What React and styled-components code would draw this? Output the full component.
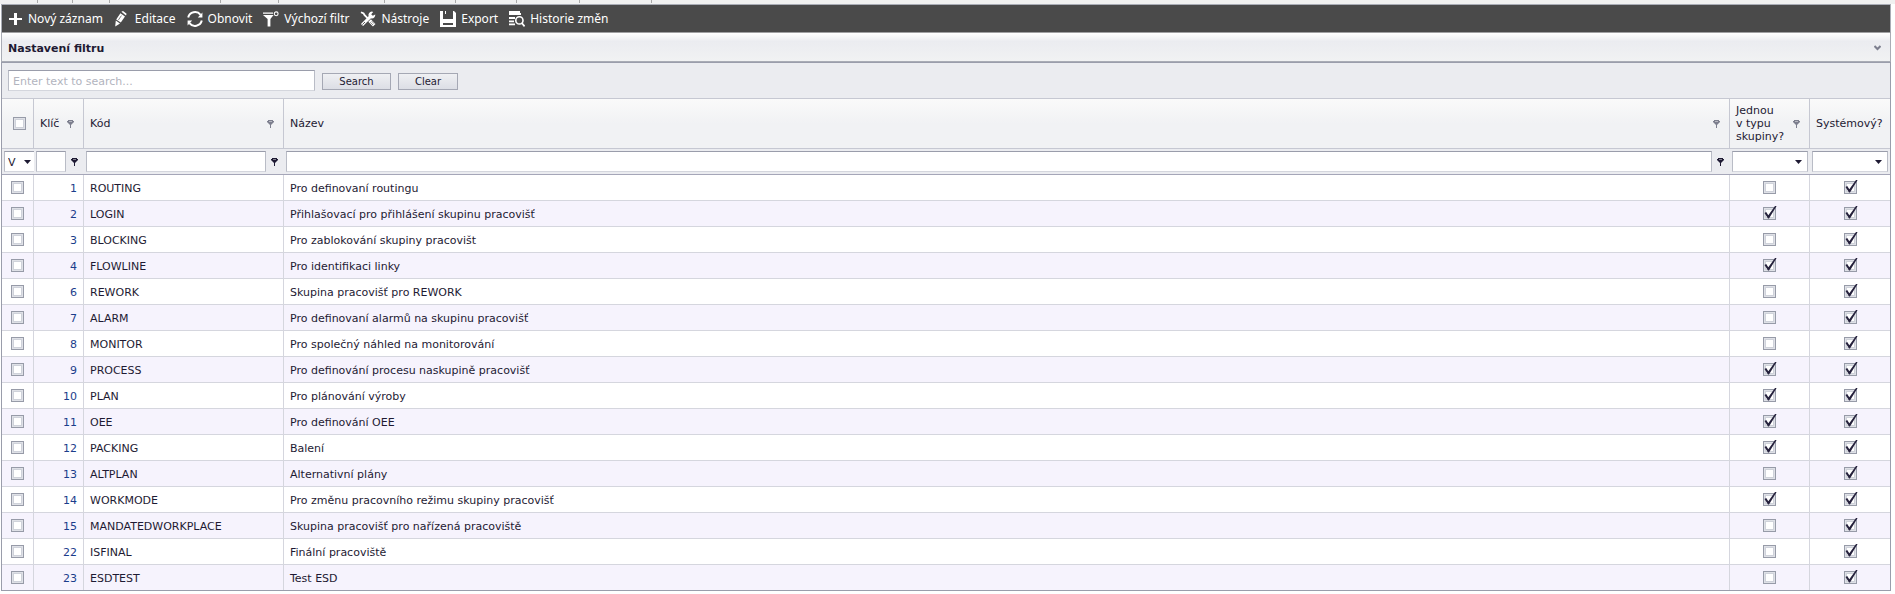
import React, { useState } from "react";
import styled, { createGlobalStyle, css } from "styled-components";

const GlobalStyle = createGlobalStyle`
  *, *::before, *::after { box-sizing: border-box; }
  body {
    margin: 0;
    background: #fff;
    color: #1e1a33;
    font-family: Verdana, "DejaVu Sans", sans-serif;
    font-size: 11px;
    line-height: 13px;
  }
  input, select, button { font: inherit; color: inherit; margin: 0; }
`;

const Page = styled.div`
  padding-right: 4px;
`;

const TabStrip = styled.div`
  display: flex;
  height: 4px;
  margin-right: -4px;
  background: #f0f0f0;
`;

const TabEdge = styled.div`
  width: ${(p) => p.$width}px;
  height: 3px;
  border-right: 1px solid #a8a8a8;
`;

const Panel = styled.main`
  margin-left: 1px;
`;

const Toolbar = styled.nav`
  display: flex;
  align-items: center;
  gap: 11px;
  height: 29px;
  padding: 0 5px;
  border: 1px solid #a9acb5;
  border-bottom-color: #a0a0a2;
  background: #4a4a4a;
`;

const ToolButton = styled.button`
  display: flex;
  align-items: center;
  gap: 5px;
  padding: 0;
  border: 0;
  background: none;
  color: #fff;
  font-family: "Segoe UI", "Noto Sans", sans-serif;
  font-size: 12px;
  line-height: 16px;
  white-space: nowrap;
  cursor: pointer;
  svg { flex: none; display: block; }
`;

const FilterHeader = styled.header`
  display: flex;
  align-items: center;
  justify-content: space-between;
  height: 29px;
  padding: 2px 9px 0 6px;
  border: 1px solid #a9acb5;
  border-width: 0 1px 1px;
  background: linear-gradient(#ffffff, #ebecf0 30%, #f1f2f3);
`;

const FilterTitle = styled.h1`
  margin: 0;
  font-size: 11px;
  line-height: 13px;
  font-weight: bold;
`;

const IconButton = styled.button`
  display: grid;
  place-items: center;
  flex: none;
  padding: 0;
  border: 0;
  background: none;
  color: ${(p) => (p.$dark ? "#1e1a33" : "#7d7f8e")};
  cursor: pointer;
  svg { display: block; }
`;

const Grid = styled.section`
  border: 1px solid #9a9dab;
  background: #fff;
`;

const SearchBar = styled.form`
  display: flex;
  align-items: center;
  gap: 7px;
  height: 36px;
  padding: 0 6px;
  border-bottom: 1px solid #c6c8d2;
  background: #ebecf0;
`;

const TextInput = styled.input`
  width: ${(p) => (p.$width ? `${p.$width}px` : "100%")};
  min-width: 0;
  height: 21px;
  padding: 2px 4px 0;
  border: 1px solid #d4d6dd;
  border-top-color: #9a9dab;
  border-left-color: #b9bcc6;
  border-right-color: #b9bcc6;
  border-radius: 0;
  background: #fff;
  outline: 0;
  &::placeholder { color: #b2b4be; opacity: 1; }
`;

const PushButton = styled.button`
  width: ${(p) => p.$width}px;
  height: 17px;
  margin-top: 2px;
  padding: 0;
  border: 1px solid #a5a8b4;
  background: linear-gradient(#eff0f3, #dcdee5);
  font-size: 10px;
  line-height: 13px;
  cursor: pointer;
`;

const Table = styled.table`
  width: 100%;
  table-layout: fixed;
  border-collapse: separate;
  border-spacing: 0;
`;

const HeadCell = styled.th`
  height: 50px;
  padding: ${(p) => (p.$flush ? "0 0 0 4px" : "0 6px")};
  border-right: 1px solid #c6c8d2;
  border-bottom: 1px solid #c6c8d2;
  background: linear-gradient(#fafafa, #f1f2f4 50%, #f1f2f4);
  font-weight: normal;
  text-align: left;
  &:last-child { border-right: 0; }
`;

const HeadContent = styled.div`
  display: flex;
  align-items: center;
  justify-content: ${(p) => (p.$center ? "center" : "space-between")};
  padding-right: ${(p) => (p.$filter ? 3 : 0)}px;
  white-space: nowrap;
`;

const HeadLabel = styled.span`
  max-width: ${(p) => (p.$narrow ? "52px" : "none")};
  white-space: ${(p) => (p.$narrow ? "normal" : "nowrap")};
`;

const FilterCell = styled.td`
  height: 26px;
  padding: 0 ${(p) => (p.$flush ? 0 : 2)}px 0 2px;
  border-bottom: 1px solid #a5a6b8;
  background: #ebecf0;
`;

const FilterContent = styled.div`
  display: flex;
  align-items: center;
  gap: 5px;
  padding-right: ${(p) => (p.$icon ? 4 : 0)}px;
`;

const SelectBox = styled.div`
  display: grid;
  flex: 1;
  min-width: 0;
  align-items: center;
  height: 21px;
  border: 1px solid #b9bcc6;
  border-top-color: #9a9dab;
  border-bottom-color: #d4d6dd;
  border-right-width: ${(p) => (p.$open ? 0 : 1)}px;
  background: #fff;
  svg {
    grid-area: 1 / 1;
    justify-self: end;
    margin-right: ${(p) => (p.$open ? 3 : 5)}px;
    pointer-events: none;
  }
`;

const Select = styled.select`
  grid-area: 1 / 1;
  width: 100%;
  height: 19px;
  padding: 2px 12px 0 3px;
  border: 0;
  border-radius: 0;
  background: none;
  appearance: none;
  outline: 0;
`;

const Row = styled.tr`
  background: ${(p) => (p.$alt ? "#f6f3fd" : "#fff")};
  &:last-child td { border-bottom: 0; height: 25px; }
`;

const Cell = styled.td`
  height: 26px;
  padding: 2px 6px 0;
  border-right: 1px solid #d5d6de;
  border-bottom: 1px solid #d5d6de;
  white-space: nowrap;
  &:last-child { border-right: 0; }
  ${(p) => p.$key && css`text-align: right; color: #1b3d8b;`}
  ${(p) => p.$check && css`padding: 0;`}
`;

const CheckBox = styled.div`
  display: grid;
  width: 13px;
  height: 13px;
  margin: 0 auto;
  svg {
    grid-area: 1 / 1;
    overflow: visible;
    pointer-events: none;
  }
`;

const CheckInput = styled.input`
  grid-area: 1 / 1;
  width: 13px;
  height: 13px;
  border: 1px solid #979ba8;
  background: #fff;
  box-shadow: inset 0 0 0 1px #dfe1e7, inset 0 0 0 2px #cfd2da;
  appearance: none;
`;

const Check = ({ label, initial = false }) => {
  const [on, setOn] = useState(initial);
  return (
    <CheckBox>
      <CheckInput type="checkbox" aria-label={label} checked={on} onChange={() => setOn(!on)} />
      {on && (
        <svg width="13" height="13" viewBox="0 0 13 13" aria-hidden="true">
          <path d="M1.5 6 L3.2 5 L5.3 8.2 L12 -1 L13.6 -1 L6 11.6 L5 11.6 Z" fill="#25213c" />
        </svg>
      )}
    </CheckBox>
  );
};

const PinIcon = () => (
  <svg width="7" height="8" viewBox="0 0 7 8" aria-hidden="true">
    <path d="M1 0h5v1h1v1h-1v1h-1v1h-1v4h-1v-4h-1v-1h-1v-1h-1v-1h1z" fill="currentColor" />
    <path d="M2 1h3v1h-3z" fill="#fff" opacity=".45" />
    <path d="M0 2h1v1h-1z M6 2h1v1h-1z M1 3h1v1h-1z M5 3h1v1h-1z M2 4h1v1h-1z M4 4h1v1h-1z" fill="currentColor" opacity=".5" />
  </svg>
);

const ArrowIcon = () => (
  <svg width="7" height="4" viewBox="0 0 7 4" aria-hidden="true">
    <path d="M0 0h7L3.5 4z" fill="#1e1a33" />
  </svg>
);

const ChevronIcon = () => (
  <svg width="7" height="6" viewBox="0 0 7 6" aria-hidden="true">
    <path d="M0.5 1 L3.5 4 L6.5 1" fill="none" stroke="currentColor" strokeWidth="2" />
  </svg>
);

const toolIcons = {
  add: <path d="M7 2h3v5h5v2h-5v5h-3v-5h-5v-2h5z" fill="#fff" />,
  edit: (
    <g fill="#fff">
      <path d="M7.4 0.8 L9 0 L12.6 2.8 L12 4.6 Z" />
      <path d="M6.4 2.2 L11 5.6 L6.8 11.6 L2.2 8.4 Z" />
      <path d="M1.8 9.6 L6 12.6 L1.2 15.6 Z" />
      <path d="M7.4 4.6 L4.4 9" stroke="#4a4a4a" strokeWidth="0.7" />
    </g>
  ),
  refresh: (
    <g>
      <path d="M1.2 6.4 A7 6.8 0 0 1 13.6 3.8 M14.8 9.6 A7 6.8 0 0 1 2.4 12.2" fill="none" stroke="#fff" strokeWidth="2" />
      <path d="M15.4 1.6V6.4H10.8Z M0.6 14.4V9.6H5.2Z" fill="#fff" />
    </g>
  ),
  filter: (
    <g>
      <path d="M0 1.6h10v1.2H0z M0 4h10.6L7.4 8V15.4H4.6V8z" fill="#fff" />
      <circle cx="13.2" cy="2.8" r="1.9" fill="none" stroke="#fff" strokeWidth="1.1" />
    </g>
  ),
  tools: (
    <g fill="none" stroke="#fff">
      <path d="M1 1.2 L3.6 2.4 L4.4 4 L9 8.6" strokeWidth="1.8" />
      <path d="M9.6 9.6 L14.2 14.2" strokeWidth="3.6" />
      <path d="M2 14 L10.6 5.4" strokeWidth="3" />
      <path d="M13.2 0.9 A3.4 3.4 0 1 0 15.2 3.4 L12.8 4.8 L11.2 3.2 Z" fill="#fff" stroke="none" />
      <path d="M2.4 13.6 L5 11" stroke="#4a4a4a" strokeWidth="0.9" />
      <path d="M10.2 11.2 L13 14 M11.6 10 L14.2 12.8" stroke="#4a4a4a" strokeWidth="0.6" />
    </g>
  ),
  save: (
    <g>
      <path d="M0 0H3V8H13V0H14L16 2V16H0Z" fill="#fff" />
      <path d="M5 0h1v3h-1z" fill="#fff" />
      <path d="M3 12h10v2H3z" fill="#4a4a4a" />
    </g>
  ),
  history: (
    <g>
      <path d="M0 0h11v2h1v2H0z M0 6h6v2H0z M0 9.4h5v1.8H0z M0 12.4h6v1.8H0z" fill="#fff" />
      <circle cx="10.4" cy="9.4" r="3.6" fill="none" stroke="#fff" strokeWidth="1.6" />
      <path d="M12.8 12 L15.6 15.4" stroke="#fff" strokeWidth="1.8" />
    </g>
  ),
};

const tools = [
  ["add", "Nový záznam"],
  ["edit", "Editace"],
  ["refresh", "Obnovit"],
  ["filter", "Výchozí filtr"],
  ["tools", "Nástroje"],
  ["save", "Export"],
  ["history", "Historie změn"],
];

const tabWidths = [38, 35, 37, 111, 58, 106, 71, 61, 63, 72];

const rows = [
  [1, "ROUTING", "Pro definovaní routingu", false],
  [2, "LOGIN", "Přihlašovací pro přihlášení skupinu pracovišť", true],
  [3, "BLOCKING", "Pro zablokování skupiny pracovišt", false],
  [4, "FLOWLINE", "Pro identifikaci linky", true],
  [6, "REWORK", "Skupina pracovišť pro REWORK", false],
  [7, "ALARM", "Pro definovaní alarmů na skupinu pracovišť", false],
  [8, "MONITOR", "Pro společný náhled na monitorování", false],
  [9, "PROCESS", "Pro definování procesu naskupině pracovišť", true],
  [10, "PLAN", "Pro plánování výroby", true],
  [11, "OEE", "Pro definování OEE", true],
  [12, "PACKING", "Balení", true],
  [13, "ALTPLAN", "Alternativní plány", false],
  [14, "WORKMODE", "Pro změnu pracovního režimu skupiny pracovišť", true],
  [15, "MANDATEDWORKPLACE", "Skupina pracovišť pro nařízená pracoviště", false],
  [22, "ISFINAL", "Finální pracoviště", false],
  [23, "ESDTEST", "Test ESD", false],
];

const ColumnHead = ({ title, narrow }) => (
  <HeadCell scope="col">
    <HeadContent $filter>
      <HeadLabel $narrow={narrow}>{title}</HeadLabel>
      <IconButton type="button" aria-label={`Filtr: ${title}`}><PinIcon /></IconButton>
    </HeadContent>
  </HeadCell>
);

const TextFilter = ({ title }) => (
  <FilterCell>
    <FilterContent $icon>
      <TextInput type="text" aria-label={title} />
      <IconButton type="button" $dark aria-label={`Podmínka: ${title}`}><PinIcon /></IconButton>
    </FilterContent>
  </FilterCell>
);

const SelectFilter = ({ title, option = "", open }) => (
  <FilterCell $flush={open}>
    <FilterContent>
      <SelectBox $open={open}>
        <Select aria-label={title}><option>{option}</option></Select>
        <ArrowIcon />
      </SelectBox>
    </FilterContent>
  </FilterCell>
);

export default function App() {
  return (
    <>
      <GlobalStyle />
      <Page>
        <TabStrip>
          {tabWidths.map((w, i) => <TabEdge key={i} $width={w} />)}
        </TabStrip>
        <Panel>
          <Toolbar>
            {tools.map(([icon, label]) => (
              <ToolButton key={icon} type="button">
                <svg width="16" height="16" viewBox="0 0 16 16" aria-hidden="true">{toolIcons[icon]}</svg>
                {label}
              </ToolButton>
            ))}
          </Toolbar>
          <FilterHeader>
            <FilterTitle>Nastavení filtru</FilterTitle>
            <IconButton type="button" aria-label="Rozbalit"><ChevronIcon /></IconButton>
          </FilterHeader>
          <Grid>
            <SearchBar onSubmit={(e) => e.preventDefault()}>
              <TextInput $width={307} type="text" aria-label="Search" placeholder="Enter text to search..." />
              <PushButton $width={69}>Search</PushButton>
              <PushButton $width={60} type="reset">Clear</PushButton>
            </SearchBar>
            <Table>
              <colgroup>
                <col style={{ width: 32 }} />
                <col style={{ width: 50 }} />
                <col style={{ width: 200 }} />
                <col />
                <col style={{ width: 80 }} />
                <col style={{ width: 80 }} />
              </colgroup>
              <thead>
                <tr>
                  <HeadCell scope="col" $flush>
                    <HeadContent $center><Check label="Vybrat vše" /></HeadContent>
                  </HeadCell>
                  <ColumnHead title="Klíč" />
                  <ColumnHead title="Kód" />
                  <ColumnHead title="Název" />
                  <ColumnHead title={"Jednou v\u00a0typu skupiny?"} narrow />
                  <HeadCell scope="col">
                    <HeadContent><HeadLabel>Systémový?</HeadLabel></HeadContent>
                  </HeadCell>
                </tr>
                <tr>
                  <SelectFilter title="Výběr" option="V" open />
                  <TextFilter title="Klíč" />
                  <TextFilter title="Kód" />
                  <TextFilter title="Název" />
                  <SelectFilter title="Jednou v typu skupiny?" />
                  <SelectFilter title="Systémový?" />
                </tr>
              </thead>
              <tbody>
                {rows.map(([id, code, name, once], i) => (
                  <Row key={id} $alt={i % 2 === 1}>
                    <Cell $check><Check label={`Vybrat ${code}`} /></Cell>
                    <Cell $key>{id}</Cell>
                    <Cell>{code}</Cell>
                    <Cell>{name}</Cell>
                    <Cell $check><Check label={`${code}: Jednou v typu skupiny?`} initial={once} /></Cell>
                    <Cell $check><Check label={`${code}: Systémový?`} initial /></Cell>
                  </Row>
                ))}
              </tbody>
            </Table>
          </Grid>
        </Panel>
      </Page>
    </>
  );
}
